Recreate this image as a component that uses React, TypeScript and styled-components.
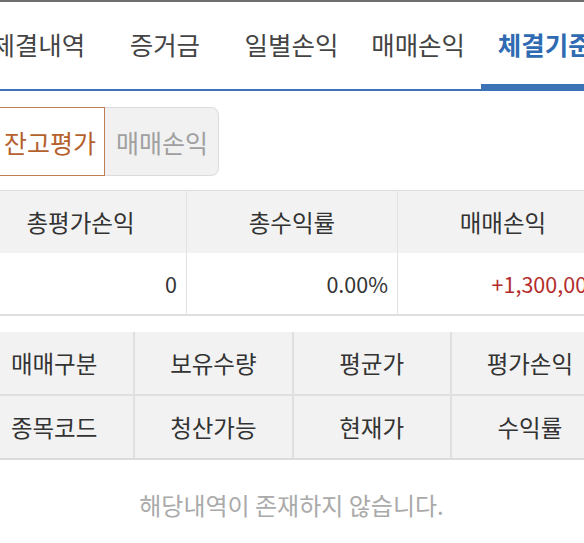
import styled, { createGlobalStyle } from 'styled-components'

const GlobalStyle = createGlobalStyle`
  html, body {
    margin: 0;
    padding: 0;
    background: #fff;
    overflow: hidden;
  }
  body {
    font-family: 'Noto Sans CJK KR', 'Noto Sans', sans-serif;
    color: #333;
  }
`

const Page = styled.div`
  width: 633px;
  margin-left: -25px;
  border-top: 2px solid #6e6e6e;
`

const TabBar = styled.div`
  display: grid;
  grid-template-columns: repeat(5, 1fr);
  height: 87px;
  border-bottom: 2px solid #3c72b6;
`

const Tab = styled.div<{ $active?: boolean }>`
  display: flex;
  align-items: center;
  justify-content: center;
  padding-bottom: 4px;
  font-size: 25.5px;
  white-space: nowrap;
  color: ${p => (p.$active ? '#2f6bb3' : '#444')};
  font-weight: ${p => (p.$active ? 700 : 400)};
  box-shadow: ${p => (p.$active ? 'inset 0 -5px 0 #3c72b6' : 'none')};
`

const Segments = styled.div`
  display: flex;
  margin: 16px 0 0 20px;
`

const Segment = styled.div<{ $active?: boolean }>`
  height: 67px;
  display: flex;
  align-items: center;
  padding: ${p => (p.$active ? '0 8px' : '0 10px 0 11px')};
  font-size: 25px;
  color: ${p => (p.$active ? '#b5612e' : '#a0a0a0')};
  background: ${p => (p.$active ? '#fff' : '#f1f1f1')};
  border: 1px solid ${p => (p.$active ? '#c07c55' : '#dcdcdc')};
  border-left: ${p => (p.$active ? '1px solid #c07c55' : 'none')};
  border-radius: ${p => (p.$active ? '0' : '0 8px 8px 0')};
`

const Summary = styled.div`
  margin-top: 14px;
  display: grid;
  grid-template-columns: repeat(3, 1fr);
  border-top: 1px solid #dedede;
  border-bottom: 2px solid #dedede;
`

const SummaryHead = styled.div`
  height: 62px;
  display: flex;
  align-items: center;
  justify-content: center;
  background: #f2f2f2;
  font-size: 23.5px;
  color: #333;
  border-left: 1px solid #e2e2e2;
  &:first-child {
    border-left: none;
  }
`

const SummaryValue = styled.div<{ $red?: boolean }>`
  height: 61px;
  display: flex;
  align-items: center;
  justify-content: flex-end;
  padding-right: 9px;
  font-size: 21.5px;
  white-space: nowrap;
  color: ${p => (p.$red ? '#b32c2c' : '#333')};
  border-left: 1px solid #e2e2e2;
  &:nth-child(4) {
    border-left: none;
  }
`

const Grid = styled.div`
  margin-top: 16px;
  display: grid;
  grid-template-columns: repeat(4, 1fr);
  background: #f2f2f2;
  border-bottom: 2px solid #dcdcdc;
`

const GridCell = styled.div<{ $col: number; $row: number }>`
  height: 62px;
  display: flex;
  align-items: center;
  justify-content: center;
  font-size: 23.5px;
  color: #333;
  border-left: ${p => (p.$col === 0 ? 'none' : '2px solid #e0e0e0')};
  border-top: ${p => (p.$row === 1 ? '2px solid #e0e0e0' : 'none')};
`

const Empty = styled.div`
  padding-top: 27px;
  text-align: center;
  font-size: 24px;
  color: #aaa;
`

const headRows = [
  ['매매구분', '보유수량', '평균가', '평가손익'],
  ['종목코드', '청산가능', '현재가', '수익률'],
]

const App = () => (
  <>
    <GlobalStyle />
    <Page>
      <TabBar>
        <Tab>체결내역</Tab>
        <Tab>증거금</Tab>
        <Tab>일별손익</Tab>
        <Tab>매매손익</Tab>
        <Tab $active>체결기준</Tab>
      </TabBar>
      <Segments>
        <Segment $active>잔고평가</Segment>
        <Segment>매매손익</Segment>
      </Segments>
      <Summary>
        <SummaryHead>총평가손익</SummaryHead>
        <SummaryHead>총수익률</SummaryHead>
        <SummaryHead>매매손익</SummaryHead>
        <SummaryValue>0</SummaryValue>
        <SummaryValue>0.00%</SummaryValue>
        <SummaryValue $red>+1,300,000</SummaryValue>
      </Summary>
      <Grid>
        {headRows.map((row, r) =>
          row.map((label, c) => (
            <GridCell key={label} $col={c} $row={r}>
              {label}
            </GridCell>
          ))
        )}
      </Grid>
      <Empty>해당내역이 존재하지 않습니다.</Empty>
    </Page>
  </>
)

export default App
